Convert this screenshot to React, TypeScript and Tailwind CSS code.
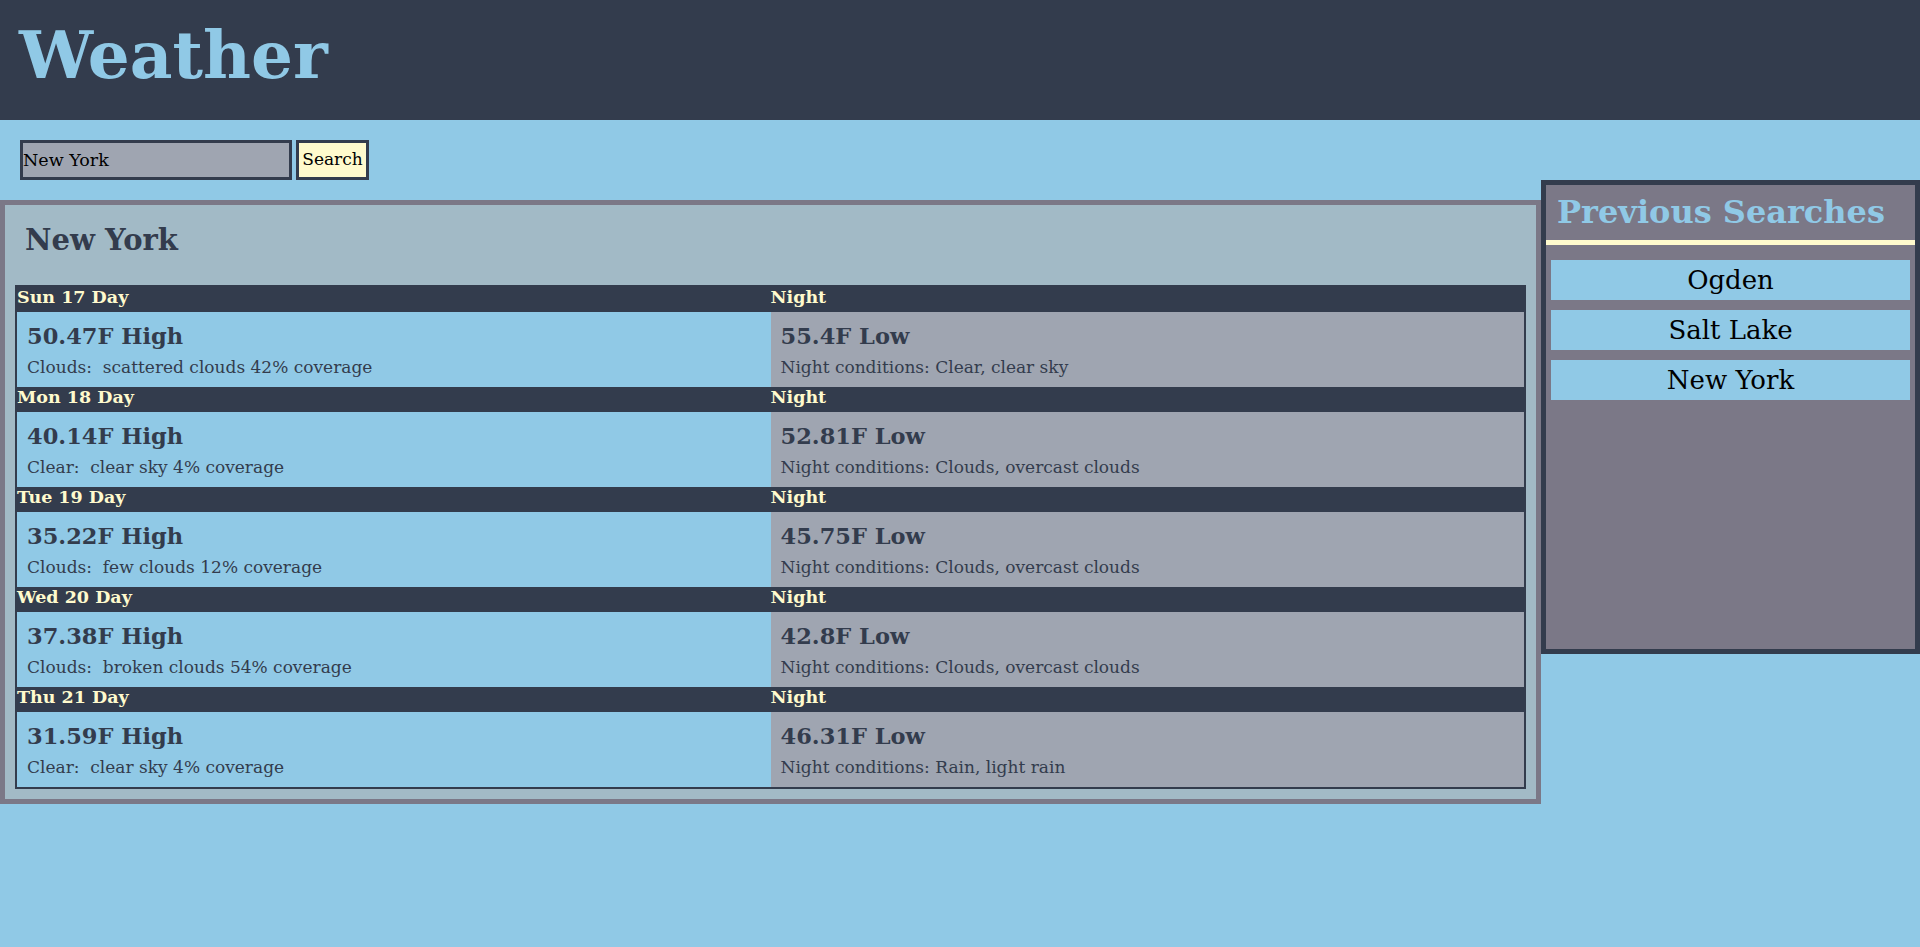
import { useState } from "react";

type Day = {
  label: string;
  high: string;
  dayMain: string;
  dayDesc: string;
  coverage: string;
  low: string;
  nightMain: string;
  nightDesc: string;
};

const days: Day[] = [
  { label: "Sun 17 Day", high: "50.47", dayMain: "Clouds", dayDesc: "scattered clouds", coverage: "42", low: "55.4", nightMain: "Clear", nightDesc: "clear sky" },
  { label: "Mon 18 Day", high: "40.14", dayMain: "Clear", dayDesc: "clear sky", coverage: "4", low: "52.81", nightMain: "Clouds", nightDesc: "overcast clouds" },
  { label: "Tue 19 Day", high: "35.22", dayMain: "Clouds", dayDesc: "few clouds", coverage: "12", low: "45.75", nightMain: "Clouds", nightDesc: "overcast clouds" },
  { label: "Wed 20 Day", high: "37.38", dayMain: "Clouds", dayDesc: "broken clouds", coverage: "54", low: "42.8", nightMain: "Clouds", nightDesc: "overcast clouds" },
  { label: "Thu 21 Day", high: "31.59", dayMain: "Clear", dayDesc: "clear sky", coverage: "4", low: "46.31", nightMain: "Rain", nightDesc: "light rain" },
];

const history = ["Ogden", "Salt Lake", "New York"];

function DayBlock({ day }: { day: Day }) {
  return (
    <div>
      <div className="grid h-[25px] grid-cols-2 bg-[#333c4d] text-[17.5px] font-bold leading-[21px] text-[#fffacd]">
        <div>{day.label}</div>
        <div>Night</div>
      </div>
      <div className="grid h-[75px] grid-cols-2 text-[#333c4d]">
        <div className="bg-[#90c9e6] px-[10px] pt-[10px]">
          <h3 className="text-[22.5px] font-bold leading-[28px]">{day.high}F High</h3>
          <p className="mt-[5px] text-[17px] leading-[24px]">
            {day.dayMain}:{"\u00a0"} {day.dayDesc} {day.coverage}% coverage
          </p>
        </div>
        <div className="bg-[#9fa5b1] px-[10px] pt-[10px]">
          <h3 className="text-[22.5px] font-bold leading-[28px]">{day.low}F Low</h3>
          <p className="mt-[5px] text-[17px] leading-[24px]">
            Night conditions: {day.nightMain}, {day.nightDesc}
          </p>
        </div>
      </div>
    </div>
  );
}

export default function App() {
  const [query, setQuery] = useState("New York");

  return (
    <div className="min-h-[947px] bg-[#90c9e6] font-['DejaVu_Serif',serif]">
      <header className="flex h-[120px] items-center bg-[#333c4d] pb-[10px] pl-[19px]">
        <h1 className="text-[66px] font-bold leading-none text-[#90c9e6]">Weather</h1>
      </header>

      <div className="flex items-start">
        <div className="w-[1541px] shrink-0">
          <form
            className="flex gap-[4px] pl-[20px] pt-[20px]"
            onSubmit={(e) => e.preventDefault()}
          >
            <input
              value={query}
              onChange={(e) => setQuery(e.target.value)}
              className="h-[40px] w-[272px] border-[3px] border-[#333c4d] bg-[#9fa5b1] px-0 text-[17.5px] text-black outline-none"
            />
            <button
              type="submit"
              className="h-[40px] w-[73px] border-[3px] border-[#333c4d] bg-[#fffacd] p-0 text-[17px] text-black"
            >
              Search
            </button>
          </form>

          <main className="mt-[20px] border-[5px] border-[#7b7887] bg-[#a2bac6] px-[10px] pb-[10px] pt-[10px]">
            <h2 className="mb-[20px] h-[50px] pl-[10px] text-[29px] font-bold leading-[50px] text-[#333c4d]">
              New York
            </h2>
            <div className="border-2 border-[#333c4d]">
              {days.map((d) => (
                <DayBlock key={d.label} day={d} />
              ))}
            </div>
          </main>
        </div>

        <aside className="mt-[60px] h-[474px] flex-1 border-[5px] border-[#333c4d] bg-[#7b7887]">
          <h2 className="h-[55px] pl-[11px] pt-[7px] text-[32px] font-bold leading-[40px] text-[#90c9e6]">
            Previous Searches
          </h2>
          <div className="h-[5px] bg-[#fffacd]" />
          <ul className="flex flex-col gap-[10px] pl-[5px] pr-[5px] pt-[15px]">
            {history.map((city) => (
              <li key={city}>
                <button
                  type="button"
                  onClick={() => setQuery(city)}
                  className="h-[40px] w-full bg-[#90c9e6] text-center text-[26px] leading-[40px] text-black"
                >
                  {city}
                </button>
              </li>
            ))}
          </ul>
        </aside>
      </div>
    </div>
  );
}
